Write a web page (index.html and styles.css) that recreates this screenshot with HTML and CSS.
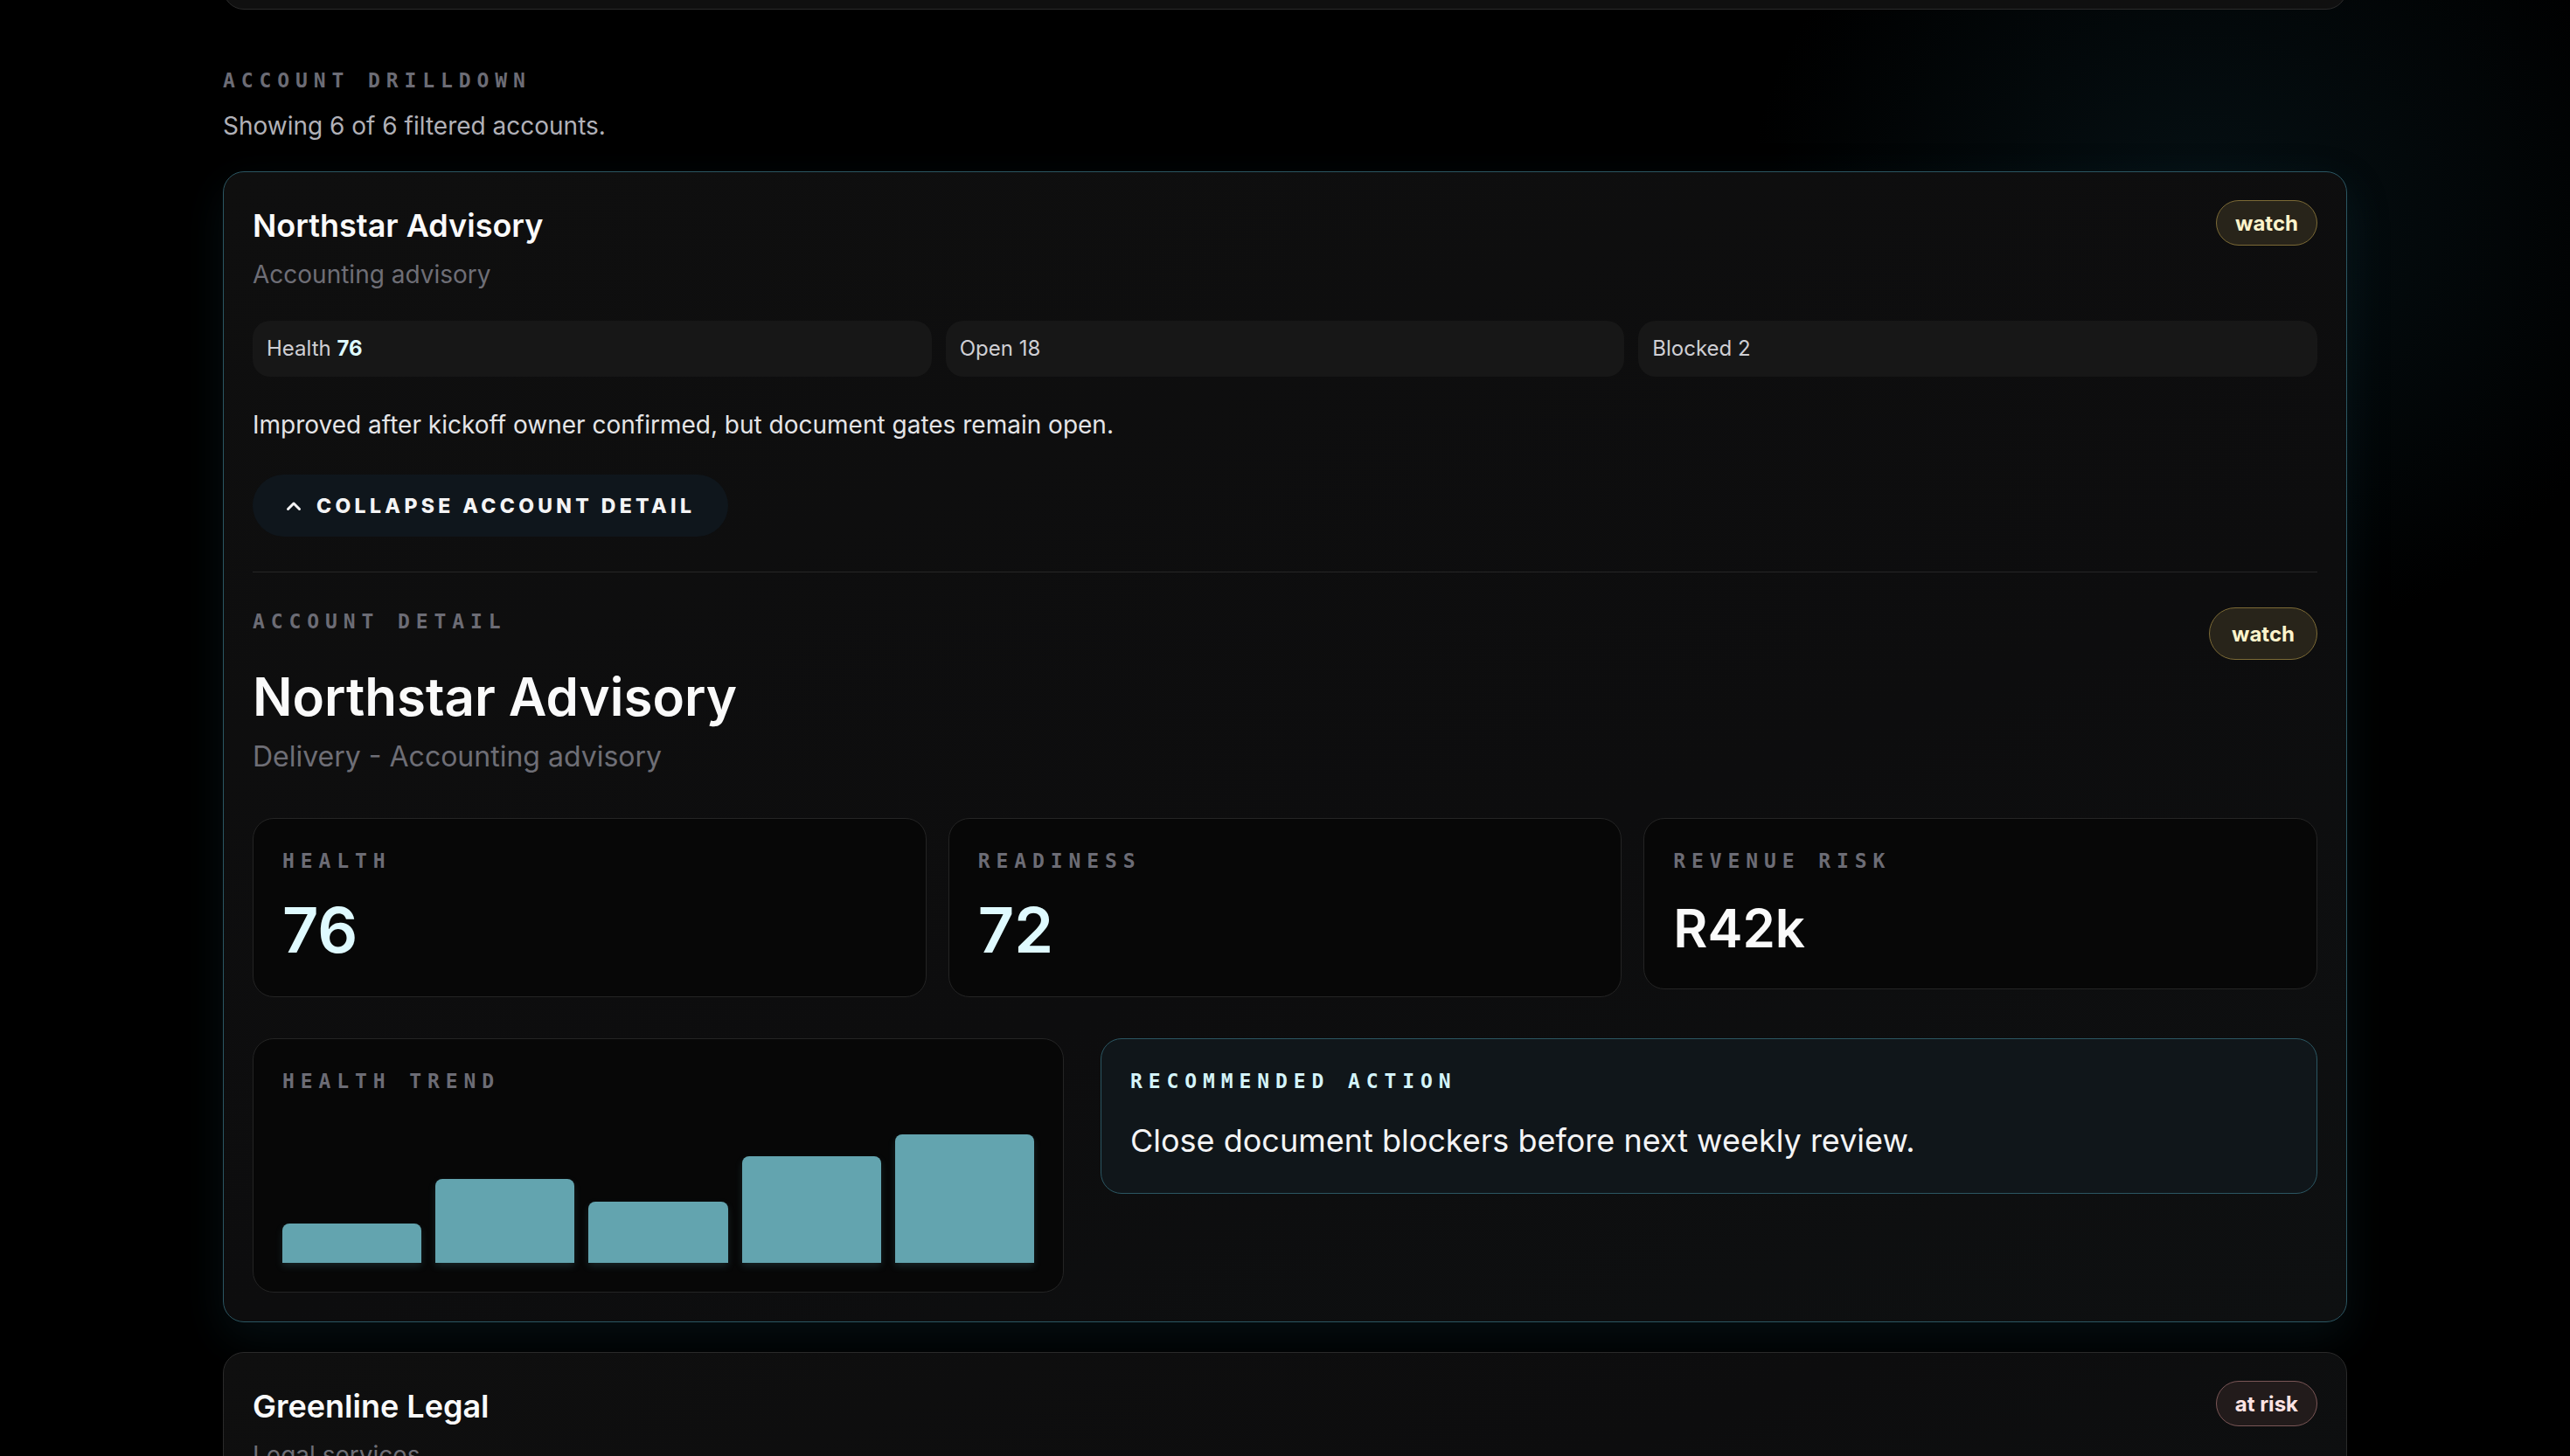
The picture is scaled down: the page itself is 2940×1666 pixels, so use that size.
FILE: index.html
```html
<!DOCTYPE html>
<html lang="en">
<head>
    <meta charset="UTF-8">
    <meta name="viewport" content="width=device-width, initial-scale=1.0">
    <title>Account Drilldown</title>
    <link rel="stylesheet" href="styles.css">
</head>
<body>
    <main class="page">
        <!-- tail of the panel above (page is scrolled) -->
        <div class="panel-tail"></div>

        <section class="drilldown">
            <header class="section-head">
                <p class="eyebrow">Account drilldown</p>
                <p class="section-note">Showing 6 of 6 filtered accounts.</p>
            </header>

            <div class="account-list">
                <article class="account-card is-open">
                    <div class="account-head">
                        <div>
                            <h3 class="account-name">Northstar Advisory</h3>
                            <p class="account-sector">Accounting advisory</p>
                        </div>
                        <span class="badge badge-watch">watch</span>
                    </div>

                    <div class="stat-row">
                        <div class="stat">Health <strong>76</strong></div>
                        <div class="stat">Open 18</div>
                        <div class="stat">Blocked 2</div>
                    </div>

                    <p class="account-summary">Improved after kickoff owner confirmed, but document gates remain open.</p>

                    <button class="toggle" type="button">
                        <svg class="chevron" width="18" height="12" viewBox="0 0 18 12" aria-hidden="true">
                            <polyline points="2.5,9.5 9,3 15.5,9.5" fill="none" stroke="currentColor" stroke-width="3" stroke-linecap="round" stroke-linejoin="round"/>
                        </svg>
                        Collapse account detail
                    </button>

                    <div class="detail">
                        <div class="detail-head">
                            <div>
                                <p class="eyebrow">Account detail</p>
                                <h2 class="detail-name">Northstar Advisory</h2>
                                <p class="detail-meta">Delivery - Accounting advisory</p>
                            </div>
                            <span class="badge badge-watch badge-lg">watch</span>
                        </div>

                        <div class="metric-grid">
                            <div class="metric">
                                <p class="eyebrow">Health</p>
                                <p class="metric-value">76</p>
                            </div>
                            <div class="metric">
                                <p class="eyebrow">Readiness</p>
                                <p class="metric-value">72</p>
                            </div>
                            <div class="metric">
                                <p class="eyebrow">Revenue risk</p>
                                <p class="metric-value is-money">R42k</p>
                            </div>
                        </div>

                        <div class="detail-grid">
                            <div class="trend-card">
                                <p class="eyebrow">Health trend</p>
                                <div class="trend-bars">
                                    <span class="bar" style="height: 26.5%"></span>
                                    <span class="bar" style="height: 56.5%"></span>
                                    <span class="bar" style="height: 41.2%"></span>
                                    <span class="bar" style="height: 71.8%"></span>
                                    <span class="bar" style="height: 86.5%"></span>
                                </div>
                            </div>
                            <div class="action-card">
                                <p class="eyebrow eyebrow-accent">Recommended action</p>
                                <p class="action-text">Close document blockers before next weekly review.</p>
                            </div>
                        </div>
                    </div>
                </article>

                <article class="account-card">
                    <div class="account-head">
                        <div>
                            <h3 class="account-name">Greenline Legal</h3>
                            <p class="account-sector">Legal services</p>
                        </div>
                        <span class="badge badge-risk">at risk</span>
                    </div>

                    <div class="stat-row">
                        <div class="stat">Health <strong>54</strong></div>
                        <div class="stat">Open 24</div>
                        <div class="stat">Blocked 5</div>
                    </div>
                </article>
            </div>
        </section>
    </main>
</body>
</html>
```

FILE: styles.css
```css
/* --- base --- */
body {
    margin: 0;
    background-color: #000;
    background-image: radial-gradient(ellipse 700px 650px at 2520px 260px, rgba(18, 52, 64, 0.32), rgba(0, 0, 0, 0) 75%);
    background-repeat: no-repeat;
    color: #f4f4f5;
    font-family: Inter, "Noto Sans", sans-serif;
}

.page {
    max-width: 2430px;
    margin: 0 auto;
}

/* bottom of the panel above, scrolled past */
.panel-tail {
    height: 48px;
    margin-top: -37px;
    background-color: #101010;
    border: 1px solid #2b2b2b;
    border-radius: 24px;
    box-sizing: border-box;
}

.eyebrow {
    margin: 0;
    font-family: "DejaVu Sans Mono", monospace;
    font-size: 23px;
    font-weight: bold;
    line-height: 1.4;
    letter-spacing: 0.3em;
    text-transform: uppercase;
    color: #6c6c75;
}

.eyebrow-accent {
    color: #d4f4f9;
}

.section-head {
    margin-top: 65px;
}

.section-note {
    margin: 15px 0 0;
    font-size: 28px;
    line-height: 1.5;
    color: #b1b1b8;
}

/* --- account cards --- */
.account-list {
    display: flex;
    flex-direction: column;
    gap: 34px;
    margin-top: 31px;
}

.account-card {
    background: linear-gradient(160deg, #0f0f0f 0%, #0d0d0e 60%, #0e1011 100%);
    border: 1px solid #2a2a2a;
    border-radius: 24px;
    padding: 32px 33px 33px;
}

.account-card.is-open {
    border-color: #2b5662;
    box-shadow: 0 18px 50px rgba(22, 70, 82, 0.22);
}

.account-head,
.detail-head {
    display: flex;
    justify-content: space-between;
    align-items: flex-start;
    gap: 24px;
}

.account-name {
    margin: 2px 0 0;
    font-size: 36px;
    font-weight: 600;
    line-height: 1.5;
    color: #fafafa;
}

.account-sector {
    margin: 8px 0 0;
    font-size: 28px;
    line-height: 1.5;
    color: #6e6e76;
}

.badge {
    display: inline-flex;
    align-items: center;
    height: 52px;
    padding: 0 21px;
    box-sizing: border-box;
    border: 1.5px solid;
    border-radius: 999px;
    font-size: 24px;
    font-weight: 700;
    white-space: nowrap;
}

.badge-lg {
    height: 60px;
    padding: 0 25px;
}

.badge-watch {
    color: #fdf4cc;
    background-color: #28241a;
    border-color: #7c6a36;
}

.badge-risk {
    color: #fde3e3;
    background-color: #221b1b;
    border-color: #7a5656;
}

.stat-row {
    display: grid;
    grid-template-columns: repeat(3, 1fr);
    gap: 16px;
    margin-top: 32px;
}

.stat {
    height: 64px;
    line-height: 64px;
    padding: 0 16px;
    background-color: #171717;
    border-radius: 20px;
    font-size: 24px;
    color: #cfcfd4;
}

.stat strong {
    color: #dffaff;
    font-weight: 700;
}

.account-summary {
    margin: 34px 0 0;
    font-size: 28px;
    line-height: 1.5;
    color: #e4e4e7;
}

.toggle {
    display: flex;
    align-items: center;
    gap: 17px;
    width: fit-content;
    height: 71px;
    margin-top: 36px;
    padding: 0 38px;
    border: none;
    border-radius: 999px;
    background-color: #0f161c;
    color: #f4f4f5;
    font-family: Inter, "Noto Sans", sans-serif;
    font-size: 23px;
    font-weight: 800;
    letter-spacing: 0.19em;
    text-transform: uppercase;
    cursor: pointer;
}

/* --- expanded detail --- */
.detail {
    margin-top: 40px;
    padding-top: 40px;
    border-top: 1px solid #262626;
}

.detail-name {
    margin: 37px 0 0;
    font-size: 60px;
    font-weight: 600;
    line-height: 1.1;
    color: #fafafa;
}

.detail-meta {
    margin: 12px 0 0;
    font-size: 32px;
    line-height: 1.5;
    color: #6e6e76;
}

.metric-grid {
    display: grid;
    grid-template-columns: repeat(3, 1fr);
    gap: 25px;
    margin-top: 46px;
    align-items: start;
}

.metric,
.trend-card {
    background-color: #070707;
    border: 1px solid #242424;
    border-radius: 24px;
    padding: 32px 33px 33px;
}

.metric-value {
    margin: 19px 0 0;
    font-size: 72px;
    font-weight: 600;
    line-height: 1.2;
    color: #dffaff;
}

.metric-value.is-money {
    margin-top: 24px;
    font-size: 60px;
    color: #fafafa;
}

.detail-grid {
    display: grid;
    grid-template-columns: 2fr 3fr;
    gap: 42px;
    margin-top: 47px;
    align-items: start;
}

.trend-card {
    padding-bottom: 33px;
}

.trend-bars {
    display: flex;
    align-items: flex-end;
    gap: 16px;
    height: 170px;
    margin-top: 22px;
}

.bar {
    flex: 1;
    background-color: #63a4af;
    border-radius: 8px 8px 0 0;
    box-shadow: 0 4px 8px rgba(99, 164, 175, 0.18);
}

.action-card {
    background-color: #10161a;
    border: 1px solid #2b5662;
    border-radius: 24px;
    padding: 32px 33px 33px;
}

.action-text {
    margin: 25px 0 0;
    font-size: 36px;
    line-height: 1.5;
    color: #f4f4f5;
}
```
